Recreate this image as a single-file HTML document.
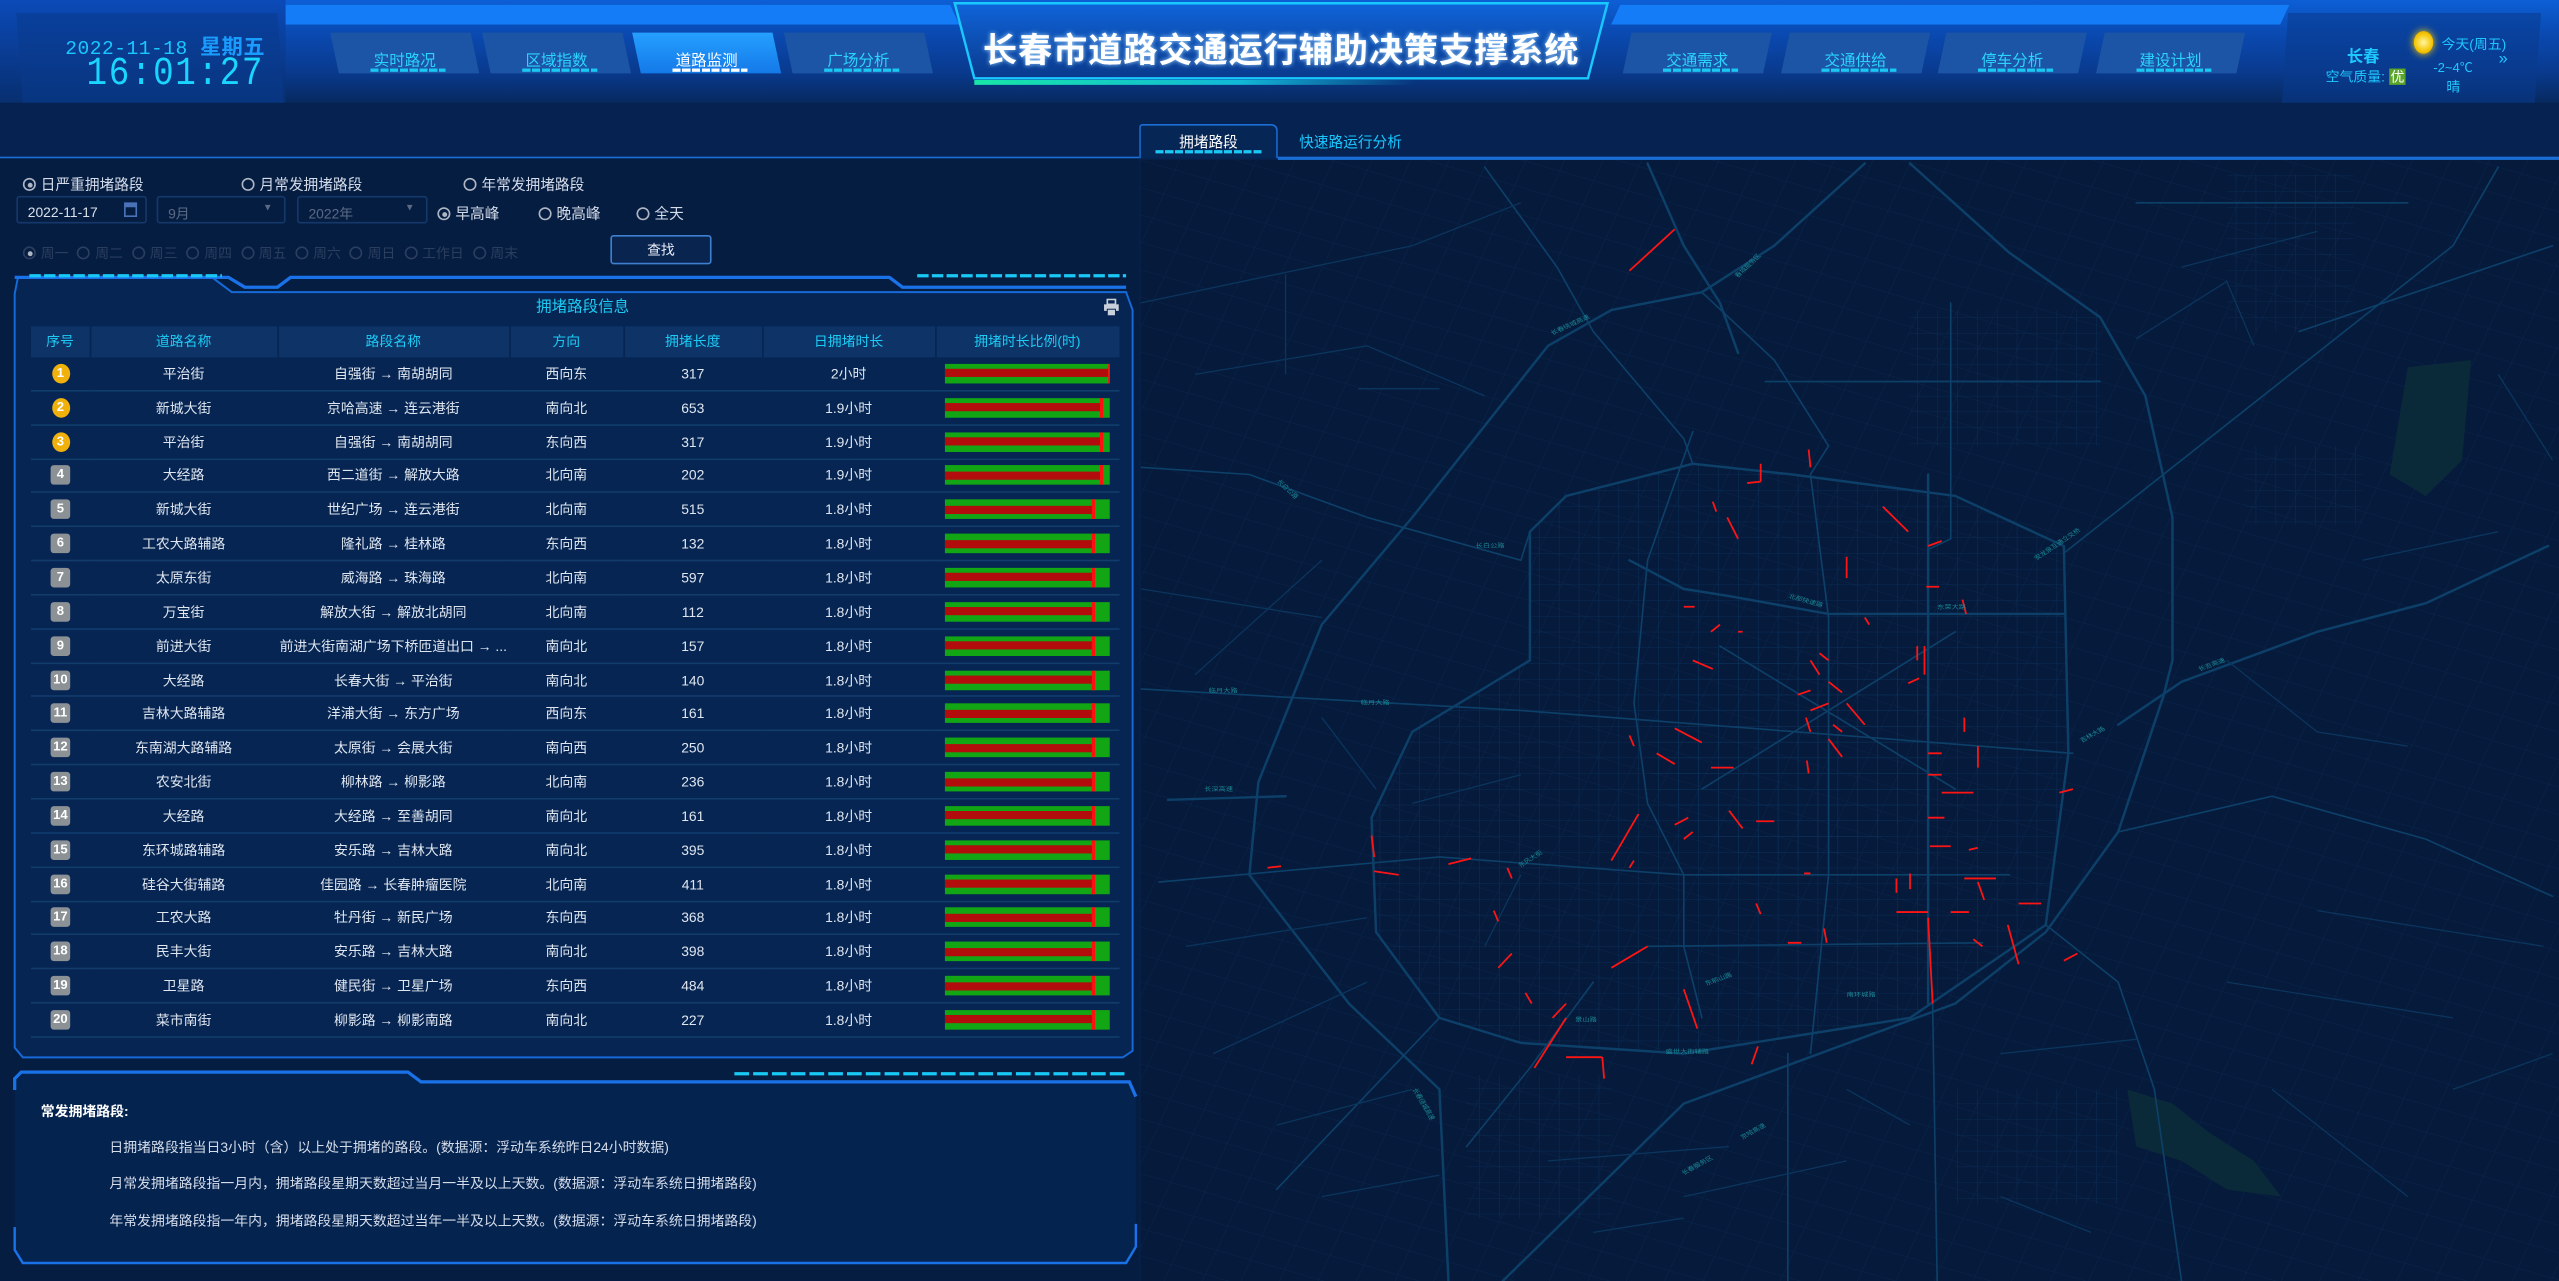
<!DOCTYPE html>
<html><head><meta charset="utf-8">
<style>
*{margin:0;padding:0;box-sizing:border-box}
html,body{width:2559px;height:1281px;overflow:hidden;background:#061a3c}
#w{position:absolute;left:0;top:0;width:1568px;height:785px;transform:scale(1.6320,1.6318);transform-origin:0 0;background:#06204a;font-family:"Liberation Sans","Noto Sans CJK SC",sans-serif;color:#d4dcea;font-size:9px}
.a{position:absolute}
.hdr{left:0;top:0;width:1568px;height:63px;background:linear-gradient(180deg,#0d5fd6 0%,#0a4bb4 30%,#093a8e 70%,#07295f 100%)}
.tab{position:absolute;top:20px;width:86px;height:25px}
.tab .bg{position:absolute;inset:0;background:#1d55a6;transform:skewX(12deg)}
.tab.on .bg{background:linear-gradient(180deg,#25a0ff,#1479e8)}
.tab span{position:absolute;left:0;right:0;top:9px;text-align:center;color:#2ad4ff;font-size:9.5px}
.tab.on span{color:#fff}
.tab i{position:absolute;left:22px;right:18px;top:22px;height:2px;background:repeating-linear-gradient(90deg,#19c8f5 0 5px,transparent 5px 6px)}
.tab.on i{background:repeating-linear-gradient(90deg,#ffffff 0 5px,transparent 5px 6px)}
.rad{display:inline-block;width:8px;height:8px;border:1px solid #aeb6c4;border-radius:50%;vertical-align:-1px;margin-right:3px;position:relative}
.rad.on:after{content:"";position:absolute;left:1.5px;top:1.5px;width:3px;height:3px;border-radius:50%;background:#aeb6c4}
.inp{position:absolute;height:17px;border:1px solid #15386a;background:#061d42;color:#d9e0ea;font-size:8.5px;padding:4px 0 0 6px;border-radius:2px}
table{border-collapse:collapse;table-layout:fixed;position:absolute;left:19px;top:200px;width:667px}
th{height:18.5px;background:#0e3467;color:#1ccbf5;font-weight:normal;font-size:8.5px;border-right:1px solid #062552}
td{height:20.85px;text-align:center;font-size:8.5px;color:#dfe6f0;border-bottom:1px solid #113c6c;white-space:nowrap;overflow:hidden}
.b1{display:inline-block;width:11px;height:12px;border-radius:50%;background:#f0b10c;color:#fff;font-size:8px;line-height:12px;font-weight:bold}
.b2{display:inline-block;width:12px;height:12px;border-radius:2px;background:#8c9196;color:#fff;font-size:8px;line-height:12px;font-weight:bold}
.bar{position:relative;width:101px;height:12px;background:#12a514;margin:0 auto 0 6px}
.bar i{position:absolute;left:0;top:3.5px;height:5px;background:#b30c0c}
.bar b{position:absolute;top:0;width:1.5px;height:12px;background:#ff1010}
.mt{fill:#1a8a96;font-size:8px;font-family:"Liberation Sans","Noto Sans CJK SC",sans-serif}
</style></head><body><div id="w">

<div class="a hdr"></div>
<div class="a" style="left:170px;top:3px;width:415px;height:12px;background:#157cf8;transform:skewX(25deg)"></div>
<div class="a" style="left:990px;top:3px;width:410px;height:12px;background:#157cf8;transform:skewX(-25deg)"></div>
<div class="a" style="left:0;top:0;width:175px;height:63px;background:linear-gradient(180deg,#0b4ab8,#082f70)"></div>
<div class="a" style="left:12px;top:8px;width:160px;height:57px;background:#0a3a8c;opacity:.55;transform:skewX(4deg)"></div>
<div class="a" style="left:40px;top:18px;color:#19c8ff;font-size:12px;letter-spacing:.3px;font-family:'Liberation Mono',monospace">2022-11-18 <b style="font-family:'Liberation Sans','Noto Sans CJK SC',sans-serif;color:#1a9cff;font-size:13px">星期五</b></div>
<div class="a" style="left:53px;top:33px;color:#1ad6ff;font-size:21px;letter-spacing:1px;font-family:'Liberation Mono',monospace;transform:scaleY(1.15);transform-origin:0 0">16:01:27</div>

<div class="tab" style="left:205px"><div class="bg"></div><span>实时路况</span><i></i></div>
<div class="tab" style="left:298px"><div class="bg"></div><span>区域指数</span><i></i></div>
<div class="tab on" style="left:390px"><div class="bg"></div><span>道路监测</span><i></i></div>
<div class="tab" style="left:483px"><div class="bg"></div><span>广场分析</span><i></i></div>
<div class="tab" style="left:997px"><div class="bg" style="transform:skewX(-12deg)"></div><span>交通需求</span><i></i></div>
<div class="tab" style="left:1094px"><div class="bg" style="transform:skewX(-12deg)"></div><span>交通供给</span><i></i></div>
<div class="tab" style="left:1190px"><div class="bg" style="transform:skewX(-12deg)"></div><span>停车分析</span><i></i></div>
<div class="tab" style="left:1287px"><div class="bg" style="transform:skewX(-12deg)"></div><span>建设计划</span><i></i></div>

<svg class="a" style="left:575px;top:0" width="420" height="60">
<defs><linearGradient id="tg" x1="0" y1="0" x2="0" y2="1"><stop offset="0" stop-color="#0f64da"/><stop offset="1" stop-color="#0a3a8c"/></linearGradient>
<linearGradient id="gl" x1="0" x2="1"><stop offset="0" stop-color="#18e6a8"/><stop offset=".6" stop-color="#12b8d8"/><stop offset="1" stop-color="#12b8d8" stop-opacity="0"/></linearGradient></defs>
<polygon points="10,2 410,2 398,48 22,48" fill="url(#tg)" stroke="#19c8ff" stroke-width="1.5"/>
<rect x="22" y="49" width="270" height="3" fill="url(#gl)"/>
</svg>
<div class="a" style="left:585px;top:15px;width:400px;text-align:center;color:#fff;font-size:21px;font-weight:bold;letter-spacing:.5px;text-shadow:0 0 3px #9fd4ff">长春市道路交通运行辅助决策支撑系统</div>

<div class="a" style="left:1400px;top:8px;width:155px;height:57px;background:#0a3a8c;opacity:.55;transform:skewX(-4deg)"></div>
<div class="a" style="left:1438px;top:26px;color:#1ec8ff;font-size:10px;font-weight:bold">长春</div>
<div class="a" style="left:1425px;top:41px;color:#1ec8ff;font-size:8.5px">空气质量: <span style="background:#5aa42a;color:#fff;padding:0 1px">优</span></div>
<div class="a" style="left:1479px;top:19px;width:12px;height:14px;border-radius:50%;background:radial-gradient(circle,#fff6a0,#f5c400 60%,#c89000);box-shadow:0 0 5px #ffd000"></div>
<div class="a" style="left:1496px;top:21px;color:#1ec8ff;font-size:8.5px">今天(周五)</div>
<div class="a" style="left:1491px;top:36px;color:#1ec8ff;font-size:8px">-2~4℃</div>
<div class="a" style="left:1499px;top:47px;color:#1ec8ff;font-size:8.5px">晴</div>
<div class="a" style="left:1531px;top:31px;color:#1ec8ff;font-size:10px">»</div>

<div class="a" style="left:0;top:63px;width:1568px;height:34px;background:#062251"></div>
<div class="a" style="left:698px;top:76px;width:85px;height:21px;border:1px solid #1a6fd6;border-bottom:none;background:#062656;border-radius:2px 4px 0 0"></div>
<div class="a" style="left:698px;top:80px;width:85px;text-align:center;color:#fff;font-size:9px">拥堵路段</div>
<div class="a" style="left:708px;top:92px;width:65px;height:2px;background:repeating-linear-gradient(90deg,#19c8f5 0 5px,transparent 5px 6px)"></div>
<div class="a" style="left:796px;top:80px;color:#19c8ff;font-size:9px">快速路运行分析</div>
<div class="a" style="left:0;top:96px;width:698px;height:1.5px;background:#1a6fd6"></div>
<div class="a" style="left:783px;top:96px;width:785px;height:1.5px;background:#1a6fd6"></div>

<div class="a" style="left:0;top:97px;width:698px;height:688px;background:#061d42"></div>
<div class="a" style="left:14px;top:106px"><span class="rad on"></span>日严重拥堵路段</div>
<div class="a" style="left:148px;top:106px"><span class="rad"></span>月常发拥堵路段</div>
<div class="a" style="left:284px;top:106px"><span class="rad"></span>年常发拥堵路段</div>
<div class="inp" style="left:10px;top:120px;width:80px">2022-11-17<span style="position:absolute;right:5px;top:3px;width:8px;height:9px;border:1px solid #4a72b8;border-top:3px solid #4a72b8"></span></div>
<div class="inp" style="left:96px;top:120px;width:79px;color:#5a6a84">9月<span style="position:absolute;right:7px;top:4px;font-size:6px">▼</span></div>
<div class="inp" style="left:182px;top:120px;width:80px;color:#5a6a84">2022年<span style="position:absolute;right:7px;top:4px;font-size:6px">▼</span></div>
<div class="a" style="left:268px;top:124px"><span class="rad on"></span>早高峰</div>
<div class="a" style="left:330px;top:124px"><span class="rad"></span>晚高峰</div>
<div class="a" style="left:390px;top:124px"><span class="rad"></span>全天</div>
<div class="a" style="left:14px;top:149px;color:#2b3e5e;word-spacing:3px;font-size:8.5px"><span class="rad on" style="border-color:#2b3e5e"></span>周一 <span class="rad" style="border-color:#2b3e5e"></span>周二 <span class="rad" style="border-color:#2b3e5e"></span>周三 <span class="rad" style="border-color:#2b3e5e"></span>周四 <span class="rad" style="border-color:#2b3e5e"></span>周五 <span class="rad" style="border-color:#2b3e5e"></span>周六 <span class="rad" style="border-color:#2b3e5e"></span>周日 <span class="rad" style="border-color:#2b3e5e"></span>工作日 <span class="rad" style="border-color:#2b3e5e"></span>周末</div>
<div class="a" style="left:374px;top:144px;width:62px;height:18px;border:1px solid #3f7fcf;background:#0a2450;border-radius:2px;color:#e8eef8;text-align:center;font-size:8.5px;line-height:16px">查找</div>

<svg class="a" style="left:0;top:166px" width="698" height="486">
<path d="M11,4 L130,4 L142,13 L690,13 L694,24 L694,478 L688,482 L14,482 L9,476 L9,14 Z" fill="#062552" stroke="#1669d8" stroke-width="1.2"/>
<path d="M9,4 L140,4 L150,10 L170,10 L178,4 L545,4 L553,10 L690,10" fill="none" stroke="#1a72e8" stroke-width="2"/>
<line x1="18" y1="3" x2="136" y2="3" stroke="#19c8f5" stroke-width="2" stroke-dasharray="7,2"/>
<line x1="562" y1="3" x2="690" y2="3" stroke="#19c8f5" stroke-width="2" stroke-dasharray="7,2"/>
</svg>
<div class="a" style="left:8px;top:180px;width:698px;text-align:center;color:#1ccbf5;font-size:9.5px">拥堵路段信息</div>
<svg class="a" style="left:676px;top:183px" width="10" height="11"><rect x="2.5" y="0.5" width="5" height="3" fill="none" stroke="#c8d0dc"/><rect x="0.5" y="3.5" width="9" height="4" fill="#c8d0dc"/><rect x="2.5" y="6.5" width="5" height="4" fill="#c8d0dc" stroke="#062552" stroke-width=".6"/></svg>

<table>
<colgroup><col style="width:36px"><col style="width:115px"><col style="width:142px"><col style="width:70px"><col style="width:85px"><col style="width:106px"><col style="width:113px"></colgroup>
<tr><th>序号</th><th>道路名称</th><th>路段名称</th><th>方向</th><th>拥堵长度</th><th>日拥堵时长</th><th>拥堵时长比例(时)</th></tr>
<tr><td><span class="b1">1</span></td><td>平治街</td><td>自强街 → 南胡胡同</td><td>西向东</td><td>317</td><td>2小时</td><td><div class="bar"><i style="width:100px"></i><b style="left:99.5px"></b></div></td></tr>
<tr><td><span class="b1">2</span></td><td>新城大街</td><td>京哈高速 → 连云港街</td><td>南向北</td><td>653</td><td>1.9小时</td><td><div class="bar"><i style="width:96px"></i><b style="left:95px"></b></div></td></tr>
<tr><td><span class="b1">3</span></td><td>平治街</td><td>自强街 → 南胡胡同</td><td>东向西</td><td>317</td><td>1.9小时</td><td><div class="bar"><i style="width:96px"></i><b style="left:95px"></b></div></td></tr>
<tr><td><span class="b2">4</span></td><td>大经路</td><td>西二道街 → 解放大路</td><td>北向南</td><td>202</td><td>1.9小时</td><td><div class="bar"><i style="width:96px"></i><b style="left:95px"></b></div></td></tr>
<tr><td><span class="b2">5</span></td><td>新城大街</td><td>世纪广场 → 连云港街</td><td>北向南</td><td>515</td><td>1.8小时</td><td><div class="bar"><i style="width:91px"></i><b style="left:90px"></b></div></td></tr>
<tr><td><span class="b2">6</span></td><td>工农大路辅路</td><td>隆礼路 → 桂林路</td><td>东向西</td><td>132</td><td>1.8小时</td><td><div class="bar"><i style="width:91px"></i><b style="left:90px"></b></div></td></tr>
<tr><td><span class="b2">7</span></td><td>太原东街</td><td>威海路 → 珠海路</td><td>北向南</td><td>597</td><td>1.8小时</td><td><div class="bar"><i style="width:91px"></i><b style="left:90px"></b></div></td></tr>
<tr><td><span class="b2">8</span></td><td>万宝街</td><td>解放大街 → 解放北胡同</td><td>北向南</td><td>112</td><td>1.8小时</td><td><div class="bar"><i style="width:91px"></i><b style="left:90px"></b></div></td></tr>
<tr><td><span class="b2">9</span></td><td>前进大街</td><td>前进大街南湖广场下桥匝道出口 → ...</td><td>南向北</td><td>157</td><td>1.8小时</td><td><div class="bar"><i style="width:91px"></i><b style="left:90px"></b></div></td></tr>
<tr><td><span class="b2">10</span></td><td>大经路</td><td>长春大街 → 平治街</td><td>南向北</td><td>140</td><td>1.8小时</td><td><div class="bar"><i style="width:91px"></i><b style="left:90px"></b></div></td></tr>
<tr><td><span class="b2">11</span></td><td>吉林大路辅路</td><td>洋浦大街 → 东方广场</td><td>西向东</td><td>161</td><td>1.8小时</td><td><div class="bar"><i style="width:91px"></i><b style="left:90px"></b></div></td></tr>
<tr><td><span class="b2">12</span></td><td>东南湖大路辅路</td><td>太原街 → 会展大街</td><td>南向西</td><td>250</td><td>1.8小时</td><td><div class="bar"><i style="width:91px"></i><b style="left:90px"></b></div></td></tr>
<tr><td><span class="b2">13</span></td><td>农安北街</td><td>柳林路 → 柳影路</td><td>北向南</td><td>236</td><td>1.8小时</td><td><div class="bar"><i style="width:91px"></i><b style="left:90px"></b></div></td></tr>
<tr><td><span class="b2">14</span></td><td>大经路</td><td>大经路 → 至善胡同</td><td>南向北</td><td>161</td><td>1.8小时</td><td><div class="bar"><i style="width:91px"></i><b style="left:90px"></b></div></td></tr>
<tr><td><span class="b2">15</span></td><td>东环城路辅路</td><td>安乐路 → 吉林大路</td><td>南向北</td><td>395</td><td>1.8小时</td><td><div class="bar"><i style="width:91px"></i><b style="left:90px"></b></div></td></tr>
<tr><td><span class="b2">16</span></td><td>硅谷大街辅路</td><td>佳园路 → 长春肿瘤医院</td><td>北向南</td><td>411</td><td>1.8小时</td><td><div class="bar"><i style="width:91px"></i><b style="left:90px"></b></div></td></tr>
<tr><td><span class="b2">17</span></td><td>工农大路</td><td>牡丹街 → 新民广场</td><td>东向西</td><td>368</td><td>1.8小时</td><td><div class="bar"><i style="width:91px"></i><b style="left:90px"></b></div></td></tr>
<tr><td><span class="b2">18</span></td><td>民丰大街</td><td>安乐路 → 吉林大路</td><td>南向北</td><td>398</td><td>1.8小时</td><td><div class="bar"><i style="width:91px"></i><b style="left:90px"></b></div></td></tr>
<tr><td><span class="b2">19</span></td><td>卫星路</td><td>健民街 → 卫星广场</td><td>东向西</td><td>484</td><td>1.8小时</td><td><div class="bar"><i style="width:91px"></i><b style="left:90px"></b></div></td></tr>
<tr><td><span class="b2">20</span></td><td>菜市南街</td><td>柳影路 → 柳影南路</td><td>南向北</td><td>227</td><td>1.8小时</td><td><div class="bar"><i style="width:91px"></i><b style="left:90px"></b></div></td></tr>
</table>

<svg class="a" style="left:0;top:654px" width="698" height="124">
<path d="M12,3 L250,3 L258,9 L692,9 L696,18 L696,110 L690,120 L14,120 L9,112 L9,10 Z" fill="#05234f" stroke="none"/>
<path d="M9,14 L9,7 L13,3 L250,3 L258,9 L692,9 L696,18" fill="none" stroke="#1a72e8" stroke-width="2"/>
<path d="M9,98 L9,112 L14,120 L690,120 L696,110 L696,96" fill="none" stroke="#1a72e8" stroke-width="1.5"/>
<line x1="450" y1="4" x2="690" y2="4" stroke="#19c8f5" stroke-width="2" stroke-dasharray="9,2.5"/>
</svg>
<div class="a" style="left:25px;top:675px;color:#fff;font-weight:bold;font-size:8.5px">常发拥堵路段:</div>
<div class="a" style="left:67px;top:697px;font-size:8.5px">日拥堵路段指当日3小时（含）以上处于拥堵的路段。(数据源：浮动车系统昨日24小时数据)</div>
<div class="a" style="left:67px;top:719px;font-size:8.5px">月常发拥堵路段指一月内，拥堵路段星期天数超过当月一半及以上天数。(数据源：浮动车系统日拥堵路段)</div>
<div class="a" style="left:67px;top:742px;font-size:8.5px">年常发拥堵路段指一年内，拥堵路段星期天数超过当年一半及以上天数。(数据源：浮动车系统日拥堵路段)</div>

<svg class="a" style="left:698.5px;top:98px" width="869.5" height="687" viewBox="0 0 1568 1568" preserveAspectRatio="none">
<defs>
<pattern id="g1" width="22" height="22" patternUnits="userSpaceOnUse"><path d="M0,0H22M0,0V22" stroke="#0c3560" stroke-width="1" fill="none"/></pattern>
<pattern id="g2" width="40" height="36" patternUnits="userSpaceOnUse" patternTransform="rotate(20)"><path d="M0,0H40M0,0V36" stroke="#0b3159" stroke-width="1.2" fill="none"/></pattern>
</defs>
<rect width="1568" height="1568" fill="#061a3c"/>
<rect width="1568" height="1568" fill="url(#g2)" opacity=".5"/>
<path d="M430,520 L470,470 L610,425 L720,440 L900,470 L1020,540 L1025,830 L1000,1070 L850,1200 L600,1250 L420,1235 L330,1200 L260,1080 L255,920 L300,800 L430,700 Z" fill="url(#g1)" opacity=".9"/>
<ellipse cx="720" cy="820" rx="160" ry="160" fill="url(#g1)"/>
<rect x="1200" y="20" width="140" height="220" fill="url(#g1)" opacity=".8"/>
<rect x="850" y="210" width="210" height="190" fill="url(#g1)" opacity=".8"/>
<rect x="360" y="1280" width="160" height="200" fill="url(#g1)" opacity=".8"/>
<rect x="900" y="1300" width="180" height="160" fill="url(#g1)" opacity=".8"/>
<rect x="1220" y="400" width="130" height="110" fill="url(#g1)" opacity=".8"/>
<path d="M1400,290 L1470,280 L1460,420 L1420,470 L1380,440 Z" fill="#0a2a3a"/>
<path d="M1090,1300 L1140,1320 L1180,1360 L1230,1400 L1260,1450 L1200,1440 L1150,1400 L1100,1380 Z" fill="#0a2a3a"/>
<g fill="none" stroke="#0d4068" stroke-linecap="round">
<g stroke-width="1.5">
<path vector-effect="non-scaling-stroke" d="M340,1568 L330,1300 L230,1180 L120,1000 L130,870 L200,650 L300,500 L450,260 L520,210 L620,185 L700,120 L800,5"/>
<path vector-effect="non-scaling-stroke" d="M560,5 L600,120 L640,200 L660,270"/>
<path vector-effect="non-scaling-stroke" d="M850,5 L960,130 L1060,220 L1110,330 L1140,500 L1140,700 L1130,750 L1080,940 L1000,1080 L900,1180 L750,1250 L600,1320 L400,1568"/>
<path vector-effect="non-scaling-stroke" d="M430,520 L470,470 L610,425 L720,440 L900,470 L1020,540 L1025,830 L1000,1070 L850,1200 L600,1250 L420,1235 L330,1200 L260,1080 L255,920 L300,800 L430,700 Z"/>
<path vector-effect="non-scaling-stroke" d="M540,560 L600,600 L650,610 L760,635 L920,635 L1020,635"/>
<path vector-effect="non-scaling-stroke" d="M870,440 L870,1180"/>
<path vector-effect="non-scaling-stroke" d="M1080,790 L1150,730 L1300,660 L1420,620 L1555,540"/>
<path vector-effect="non-scaling-stroke" d="M30,895 L160,890"/>
</g>
<g stroke-width="1">
<path vector-effect="non-scaling-stroke" d="M610,380 L560,560 L545,760 L560,900 L600,1000 L600,1100 L620,1200"/>
<path vector-effect="non-scaling-stroke" d="M0,740 L420,770 L1030,830"/>
<path vector-effect="non-scaling-stroke" d="M20,1010 L330,975 L600,1000 L960,1000"/>
<path vector-effect="non-scaling-stroke" d="M560,1100 L930,1095"/>
<path vector-effect="non-scaling-stroke" d="M1020,550 L1100,470 L1250,320 L1450,120 L1500,10"/>
<path vector-effect="non-scaling-stroke" d="M1080,940 L1250,890 L1420,950 L1560,1030"/>
<path vector-effect="non-scaling-stroke" d="M690,310 L1060,310"/>
<path vector-effect="non-scaling-stroke" d="M895,200 L895,530 L870,545"/>
<path vector-effect="non-scaling-stroke" d="M330,1200 L150,1440"/>
<path vector-effect="non-scaling-stroke" d="M500,1150 L430,1270 L360,1380"/>
<path vector-effect="non-scaling-stroke" d="M715,1250 L715,1568"/>
<path vector-effect="non-scaling-stroke" d="M875,1180 L880,1568"/>
<path vector-effect="non-scaling-stroke" d="M1000,1070 L1080,1150 L1120,1300 L1150,1568"/>
<path vector-effect="non-scaling-stroke" d="M620,185 L700,280 L760,400 L740,440"/>
<path vector-effect="non-scaling-stroke" d="M380,10 L460,150 L500,240 L600,390 L610,425"/>
<path vector-effect="non-scaling-stroke" d="M0,430 L120,440 L250,500 L420,560 L430,520"/>
<path vector-effect="non-scaling-stroke" d="M740,440 L760,640 L760,1000 L740,1250"/>
<path vector-effect="non-scaling-stroke" d="M640,680 L900,880 M620,880 L900,660"/>
<path vector-effect="non-scaling-stroke" d="M1100,60 L1400,60 M1280,240 L1560,120"/>
</g>
</g>
<g fill="none" stroke="#0b355c" stroke-width="0.8">
<path vector-effect="non-scaling-stroke" d="M0,200 L300,120 L420,60 M60,300 L250,260 L380,330 M0,600 L200,640 M200,560 L60,720 M50,1100 L250,1060 M80,1250 L250,1150 M150,1350 L300,1300 M200,1450 L330,1420 M450,1400 L650,1380 M600,1450 L780,1400 M950,1250 L1100,1230 M1200,1150 L1450,1200 M1300,1050 L1550,1100 M1250,1300 L1400,1450 M1450,1300 L1560,1250 M1200,700 L1300,800 L1400,820 M1350,560 L1500,520 M1150,150 L1300,100 M1100,250 L1200,170 L1230,260 M1500,300 L1560,420 M300,900 L420,860 M420,1000 L380,1100 M200,780 L260,880 M160,160 L160,300 M240,320 L330,320 M950,1450 L1050,1500 M500,1500 L600,1480 M780,1300 L850,1350"/>
</g>
<g fill="none" stroke="#ff1414" stroke-width="1.1">
<path vector-effect="non-scaling-stroke" d="M540,155L590,97M738,405L740,430M685,425L685,450M670,452L685,450M632,478L636,492M648,500L660,530M780,555L780,585M820,485L848,520M870,540L885,533M868,597L882,597M908,615L912,635M858,680L858,700M866,680L866,720M848,732L860,725M610,700L632,712M740,700L750,720M750,690L760,700M726,748L740,742M760,730L775,745M740,770L760,760M780,760L800,790M765,790L775,800M735,780L740,800M590,795L620,815M570,830L590,845M540,805L545,820M760,810L775,835M630,850L655,850M736,840L738,858M870,830L885,830M870,860L885,860M885,885L920,885M1015,885L1030,880M910,780L910,800M925,820L925,850M650,910L665,935M680,925L700,925M550,915L520,980M590,930L605,920M600,950L610,940M540,990L545,980M340,985L365,977M258,995L285,1000M255,945L258,975M140,990L155,988M405,990L410,1005M390,1050L395,1065M870,920L888,920M872,960L895,960M915,965L925,962M910,1005L945,1005M925,1010L932,1035M835,1005L835,1025M850,998L850,1020M835,1052L870,1052M895,1052L915,1052M970,1040L995,1040M958,1070L970,1125M870,1060L875,1180M920,1090L930,1100M1020,1120L1035,1110M520,1130L560,1100M395,1130L410,1110M425,1165L432,1180M455,1200L470,1180M435,1270L470,1200M470,1255L510,1255M510,1255L512,1285M600,1160L615,1215M675,1265L682,1240M755,1075L758,1095M715,1095L730,1095M680,1040L685,1055M733,998L740,998M660,660L665,660M600,625L612,625M630,660L640,650M800,640L805,650"/>
</g>
<g class="mt">
<text x="455" y="245" transform="rotate(-30 455 245)">长春绕城高速</text>
<text x="660" y="165" transform="rotate(-50 660 165)">春城服务区</text>
<text x="150" y="450" transform="rotate(50 150 450)">长白公路</text>
<text x="370" y="542">长白公路</text>
<text x="75" y="745">临月大路</text>
<text x="243" y="762">临月大路</text>
<text x="70" y="883">长深高速</text>
<text x="715" y="612" transform="rotate(20 715 612)">北部快速路</text>
<text x="880" y="628">东荣大路</text>
<text x="1170" y="715" transform="rotate(-25 1170 715)">长吉高速</text>
<text x="1040" y="815" transform="rotate(-35 1040 815)">吉林大路</text>
<text x="780" y="1170">南环城路</text>
<text x="580" y="1250">盛世大街辅路</text>
<text x="665" y="1370" transform="rotate(-35 665 1370)">京哈高速</text>
<text x="600" y="1420" transform="rotate(-35 600 1420)">长春服务区</text>
<text x="990" y="560" transform="rotate(-40 990 560)">安龙泉互通立交桥</text>
<text x="300" y="1300" transform="rotate(65 300 1300)">长春绕城高速</text>
<text x="420" y="990" transform="rotate(-40 420 990)">东风大街</text>
<text x="480" y="1205">景山路</text>
<text x="625" y="1155" transform="rotate(-25 625 1155)">东前山路</text>
</g>
</svg>

</div></body></html>
